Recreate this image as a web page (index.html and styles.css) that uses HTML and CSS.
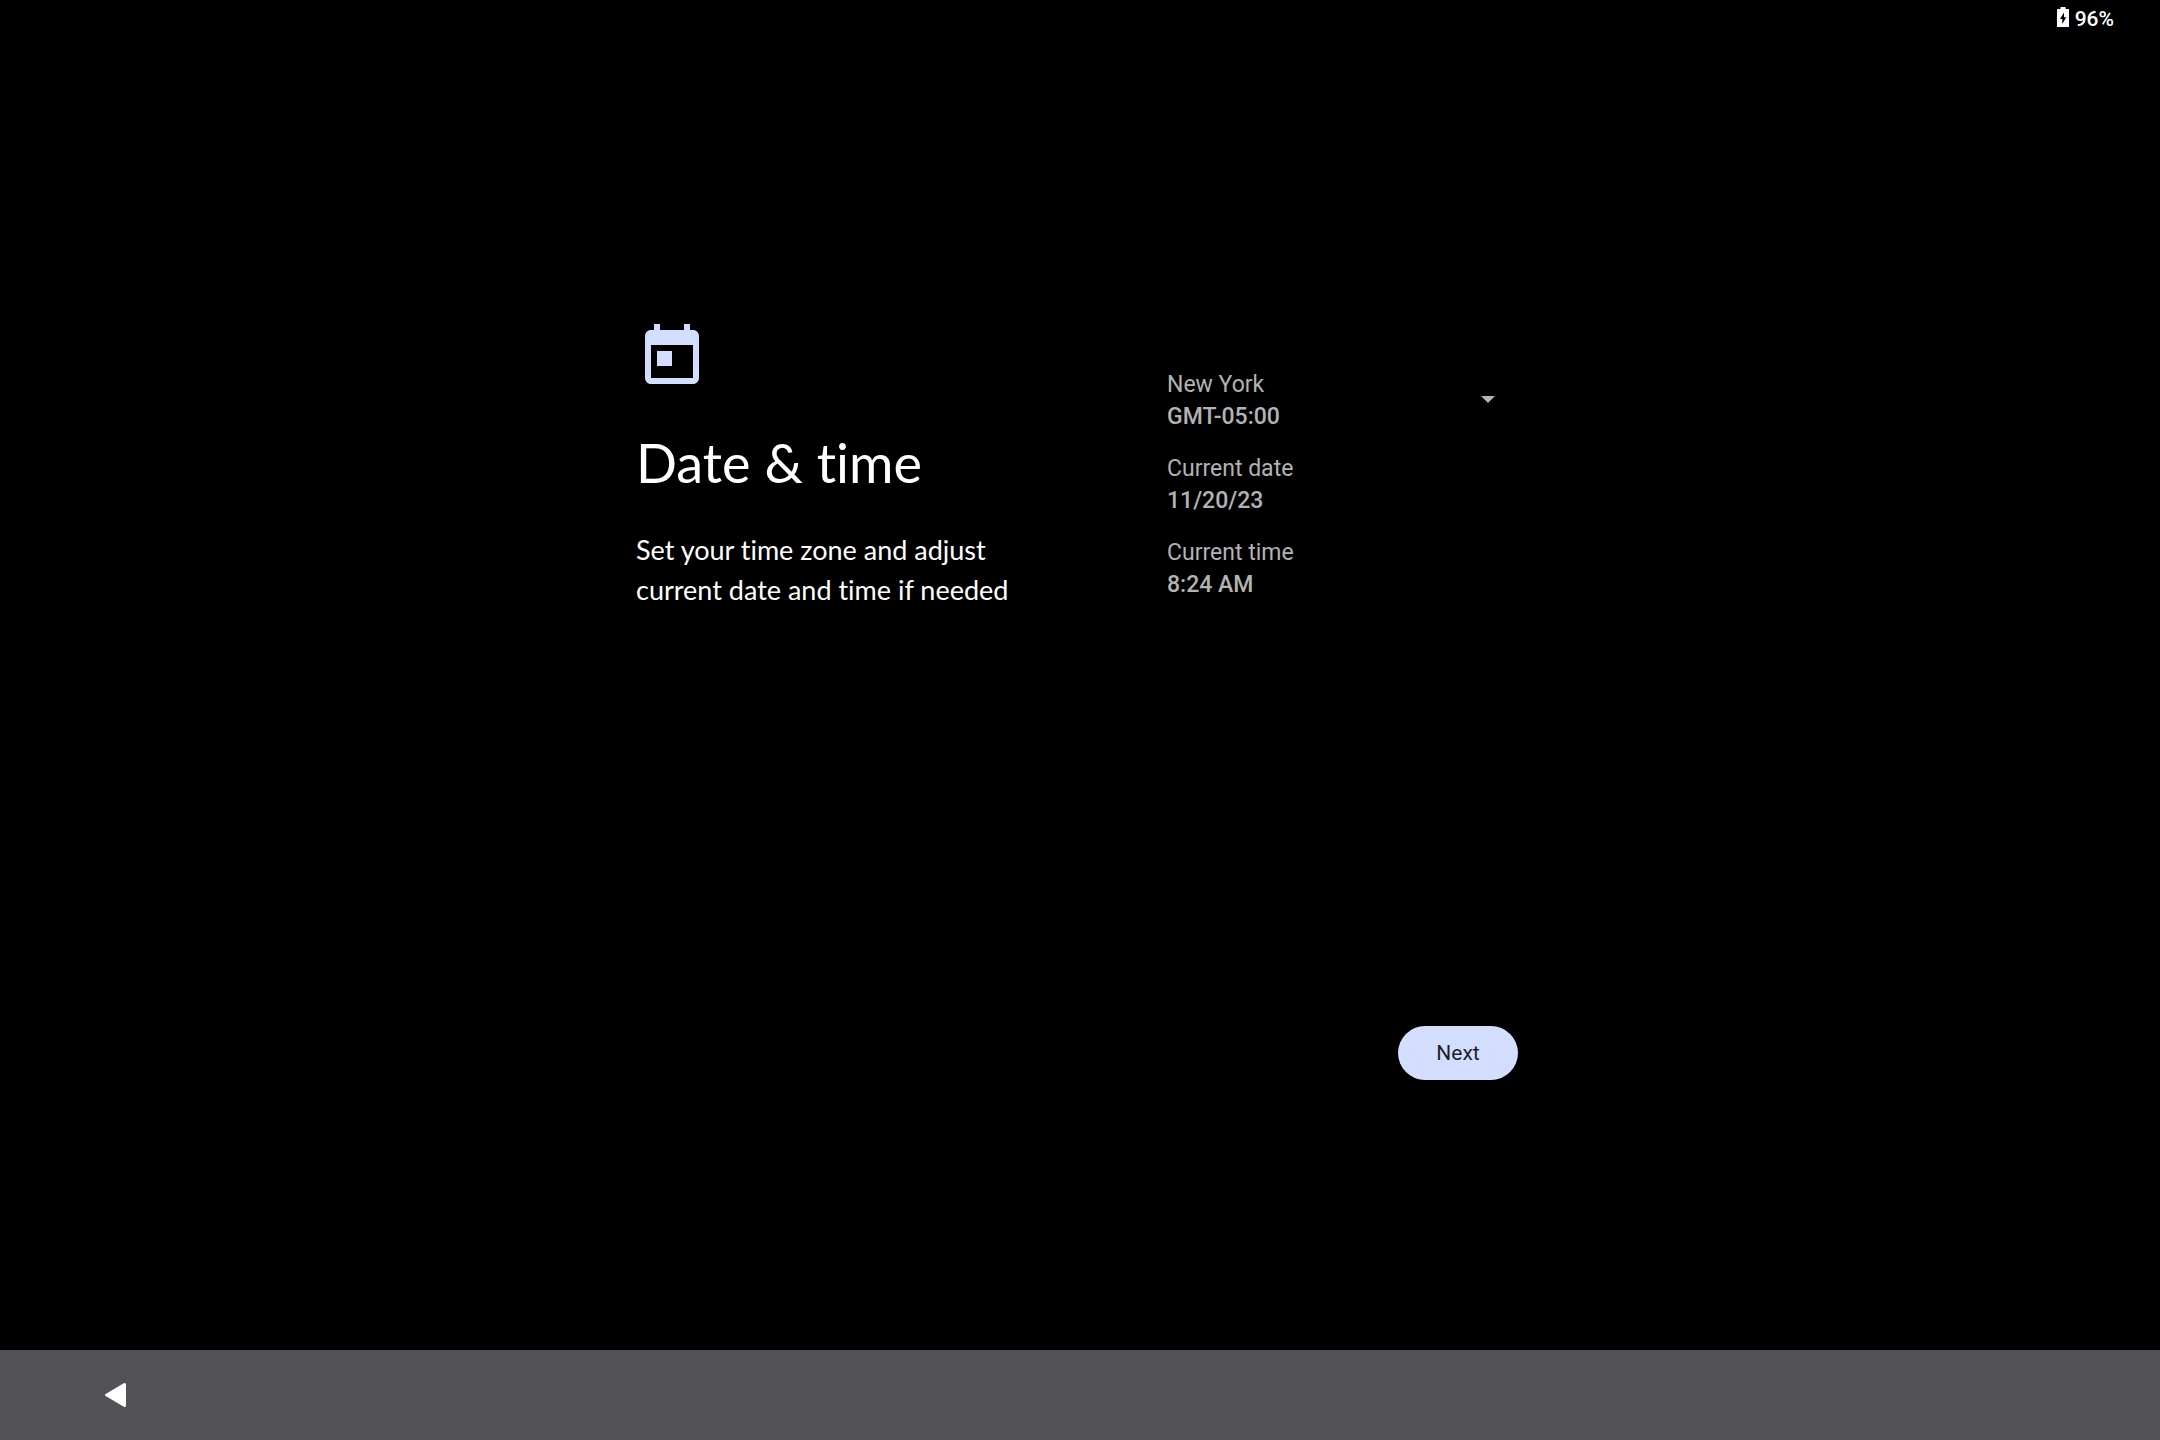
FILE: index.html
```html
<!DOCTYPE html>
<html lang="en">
<head>
  <meta charset="utf-8">
  <meta name="viewport" content="width=device-width, initial-scale=1">
  <title>Date &amp; time</title>
  <link rel="stylesheet" href="styles.css">
</head>
<body>
  <header class="status-bar">
    <svg class="battery" viewBox="0 0 12 20" aria-hidden="true">
      <path fill="currentColor" fill-rule="evenodd" d="M3.5 0h5v2h2.900Q12 2 12 2.600v16.800q0 .6-.6.6H.6Q0 20 0 19.400V2.600Q0 2 .6 2H3.500zM7 5.500 3 12h2.300v5L9.300 10.200H7z"/>
    </svg>
    <span>96%</span>
  </header>

  <main class="setup">
    <div class="panel">
      <section class="intro">
        <svg class="calendar" viewBox="0 0 24 24" aria-hidden="true">
          <path fill="currentColor" d="M19 3h-1V1h-2v2H8V1H6v2H5c-1.110 0-1.990.9-1.990 2L3 19c0 1.100.89 2 2 2h14c1.100 0 2-.9 2-2V5c0-1.100-.9-2-2-2zm0 16H5V8h14v11zM7 10h5v5H7z"/>
        </svg>
        <h1 class="title">Date &amp; time</h1>
        <p class="description">Set your time zone and adjust current date and time if needed</p>
      </section>

      <section class="settings">
        <div class="fields">
          <button class="field" type="button" aria-haspopup="listbox">
            <span class="field-text">
              <span class="field-label">New York</span>
              <span class="field-value">GMT-05:00</span>
            </span>
            <svg class="caret" viewBox="0 0 14 10" aria-hidden="true"><path fill="currentColor" d="M0 0h14L7 7z"/></svg>
          </button>
          <button class="field" type="button">
            <span class="field-text">
              <span class="field-label">Current date</span>
              <span class="field-value">11/20/23</span>
            </span>
          </button>
          <button class="field" type="button">
            <span class="field-text">
              <span class="field-label">Current time</span>
              <span class="field-value">8:24 AM</span>
            </span>
          </button>
        </div>
        <button class="next" type="button">Next</button>
      </section>
    </div>
  </main>

  <nav class="nav-bar">
    <button class="back" type="button" aria-label="Back">
      <svg class="back-icon" viewBox="0 0 21 24" aria-hidden="true">
        <path fill="currentColor" d="M.6 11 18.800.3Q21-.5 21 1.600v20.800q0 2.100-2.200 1.300L.6 13q-1.200-1 0-2z"/>
      </svg>
    </button>
  </nav>
</body>
</html>
```
FILE: styles.css
```css
* {
  box-sizing: border-box;
}

body {
  margin: 0;
  min-height: 100vh;
  display: flex;
  flex-direction: column;
  background: #000;
  color: #fff;
  font-family: Roboto, "Liberation Sans", sans-serif;
}

button {
  border: 0;
  padding: 0;
  background: none;
  color: inherit;
  font: inherit;
  cursor: pointer;
}

.status-bar {
  display: flex;
  justify-content: flex-end;
  align-items: flex-start;
  gap: 6px;
  padding: 7px 46px 11px;
  font-size: 21px;
  font-weight: 500;
  line-height: 24px;
}

.battery {
  width: 12px;
  height: 20px;
}

.setup {
  flex: 1;
  display: flex;
  justify-content: center;
  align-items: center;
}

.panel {
  width: 100%;
  max-width: 1008px;
  min-height: 864px;
  display: grid;
  grid-template-columns: 1fr 1fr;
  padding: 57px 66px 48px 60px;
}

.intro {
  font-family: Lato, sans-serif;
  font-variant-ligatures: none;
}

.calendar {
  display: block;
  width: 72px;
  height: 72px;
  color: #d3deff;
}

.title {
  margin: 34px 0 0;
  font-size: 54px;
  font-weight: 400;
  line-height: 72px;
}

.description {
  margin: 31px 0 0;
  max-width: 400px;
  font-size: 27px;
  line-height: 40px;
}

.settings {
  display: flex;
  flex-direction: column;
  justify-content: space-between;
  padding: 48px 0 0 90px;
}

.fields {
  display: flex;
  flex-direction: column;
  gap: 20px;
}

.field {
  display: flex;
  justify-content: space-between;
  align-items: center;
  padding-right: 23px;
  color: #b3b3b3;
  font-size: 23px;
  line-height: 32px;
  text-align: left;
}

.field-text {
  display: flex;
  flex-direction: column;
}

.field-value {
  font-weight: 500;
}

.caret {
  width: 14px;
  height: 10px;
}

.next {
  align-self: flex-end;
  width: 120px;
  height: 54px;
  border-radius: 27px;
  background: #d3deff;
  color: #1f1f1f;
  font-size: 21px;
}

.nav-bar {
  display: flex;
  align-items: center;
  height: 90px;
  padding: 0 79px;
  background: #515156;
}

.back {
  display: grid;
  place-items: center;
  width: 72px;
  height: 72px;
}

.back-icon {
  width: 21px;
  height: 24px;
}
```
